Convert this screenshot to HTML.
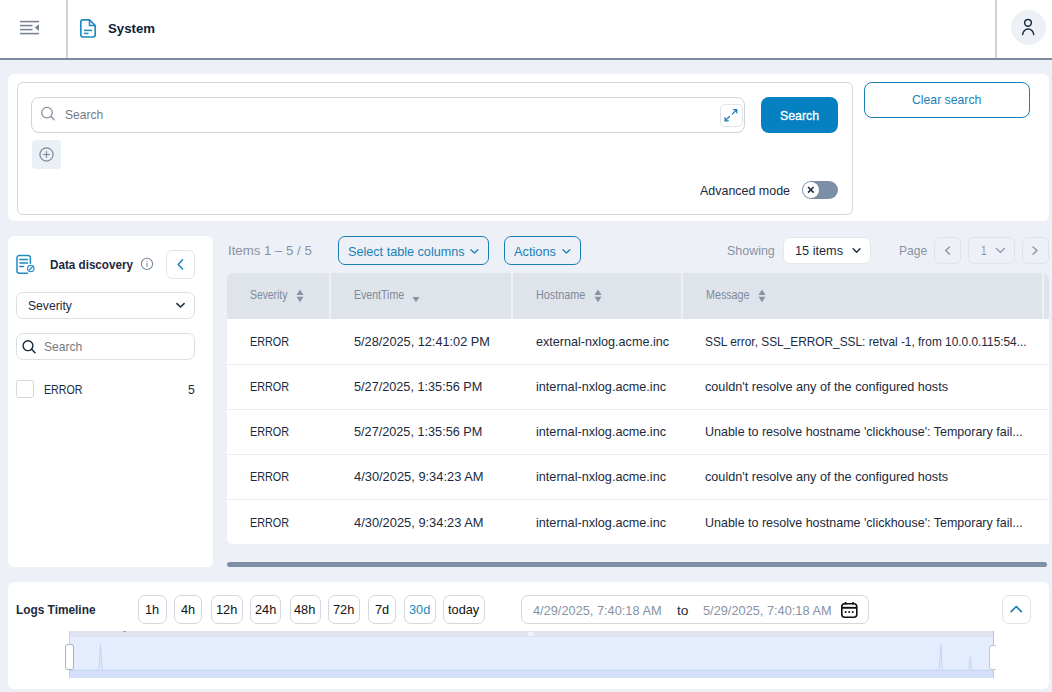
<!DOCTYPE html>
<html><head><meta charset="utf-8"><style>
html,body{margin:0;padding:0;width:1052px;height:692px;overflow:hidden;background:#edf1f7;font-family:"Liberation Sans", sans-serif;}
.a,.box,.t{position:absolute;}
.t{white-space:nowrap;transform-origin:0 0;}
svg{position:absolute;overflow:visible;}
</style></head><body>
<!-- header -->
<div class="box" style="left:0;top:0;width:1052px;height:58px;background:#fff"></div>
<div class="box" style="left:0;top:58px;width:1052px;height:2px;background:#7a8a9c"></div>
<div class="box" style="left:66px;top:0;width:2px;height:58px;background:#cdd3dc"></div>
<div class="box" style="left:995px;top:0;width:2px;height:58px;background:#cdd3dc"></div>
<!-- hamburger -->
<svg style="left:0;top:0" width="60" height="58">
 <g stroke="#7b8593" stroke-width="1.6" stroke-linecap="butt">
  <line x1="20" y1="21.6" x2="39" y2="21.6"/>
  <line x1="20" y1="25.6" x2="32.5" y2="25.6"/>
  <line x1="20" y1="29.6" x2="32.5" y2="29.6"/>
  <line x1="20" y1="33.6" x2="39" y2="33.6"/>
 </g>
 <path d="M39 24.2 L39 31 L34.8 27.6 Z" fill="#7b8593"/>
</svg>
<!-- doc icon -->
<svg style="left:0;top:0" width="120" height="58">
 <path d="M83 19.8 H89.5 L95.2 25.5 V34.8 A2.2 2.2 0 0 1 93 37 H83 A2.2 2.2 0 0 1 80.8 34.8 V22 A2.2 2.2 0 0 1 83 19.8 Z" fill="none" stroke="#1e8ac4" stroke-width="1.7" stroke-linejoin="round"/>
 <path d="M89.5 19.8 V25.5 H95.2" fill="none" stroke="#1e8ac4" stroke-width="1.5"/>
 <line x1="84" y1="30.4" x2="92" y2="30.4" stroke="#1e8ac4" stroke-width="1.5"/>
 <line x1="84" y1="33.4" x2="88.5" y2="33.4" stroke="#1e8ac4" stroke-width="1.5"/>
</svg>
<!-- avatar -->
<div class="box" style="left:1011px;top:10px;width:35px;height:35px;border-radius:50%;background:#edf1f7"></div>
<svg style="left:0;top:0" width="1052" height="58">
 <circle cx="1028" cy="22.8" r="3.4" fill="none" stroke="#1b2a3d" stroke-width="1.5"/>
 <path d="M1022.7 34.6 A5.5 5.5 0 0 1 1033.7 34.6" fill="none" stroke="#1b2a3d" stroke-width="1.5" stroke-linecap="round"/>
</svg>

<!-- search card -->
<div class="box" style="left:8px;top:73.6px;width:1041px;height:147.6px;background:#fff;border-radius:6px"></div>
<div class="box" style="left:17px;top:82px;width:836px;height:133px;border:1px solid #d4d8dd;border-radius:6px;box-sizing:border-box"></div>
<div class="box" style="left:31px;top:97px;width:714px;height:36px;border:1px solid #cfd5dd;border-radius:8px;box-sizing:border-box"></div>
<svg style="left:0;top:0" width="100" height="140">
 <circle cx="47" cy="112.6" r="5.3" fill="none" stroke="#848d99" stroke-width="1.2"/>
 <line x1="50.9" y1="116.5" x2="54.3" y2="119.9" stroke="#848d99" stroke-width="1.3" stroke-linecap="round"/>
</svg>
<div class="box" style="left:719.5px;top:104.3px;width:23px;height:22.5px;border:1px solid #e1e5ea;border-radius:5px;box-sizing:border-box"></div>
<svg style="left:0;top:0" width="760" height="140">
 <g stroke="#1a7fb5" stroke-width="1.3" fill="none" stroke-linecap="round" stroke-linejoin="round">
  <path d="M733.6 109.6 H736.8 V112.8"/><line x1="736.6" y1="109.8" x2="732.3" y2="114.1"/>
  <path d="M725.1 117.6 V120.8 H728.3"/><line x1="725.3" y1="120.6" x2="729.4" y2="116.5"/>
 </g>
</svg>
<div class="box" style="left:761px;top:97px;width:77px;height:36px;background:#0580c1;border-radius:8px"></div>
<div class="box" style="left:32px;top:140px;width:29px;height:29px;background:#ebf0f6;border-radius:4px"></div>
<svg style="left:0;top:0" width="80" height="180">
 <circle cx="46.5" cy="154.5" r="6.6" fill="none" stroke="#7d8896" stroke-width="1.2"/>
 <line x1="46.5" y1="151.2" x2="46.5" y2="157.8" stroke="#7d8896" stroke-width="1.1"/>
 <line x1="43.2" y1="154.5" x2="49.8" y2="154.5" stroke="#7d8896" stroke-width="1.1"/>
</svg>
<div class="box" style="left:802px;top:181px;width:36px;height:18px;background:#7d8fa6;border-radius:9px"></div>
<div class="box" style="left:803px;top:182px;width:16px;height:16px;background:#fff;border-radius:50%"></div>
<svg style="left:0;top:0" width="900" height="220">
 <g stroke="#1b2a3d" stroke-width="1.5" stroke-linecap="butt"><line x1="808" y1="187" x2="813.6" y2="192.6"/><line x1="813.6" y1="187" x2="808" y2="192.6"/></g>
</svg>
<div class="box" style="left:864px;top:82px;width:166px;height:36px;border:1px solid #1a7fb5;border-radius:8px;box-sizing:border-box"></div>

<!-- left panel -->
<div class="box" style="left:8px;top:236px;width:205px;height:331px;background:#fff;border-radius:6px"></div>
<svg style="left:0;top:0" width="220" height="420">
 <g fill="none" stroke="#1e8ac4" stroke-width="1.5" stroke-linecap="round" stroke-linejoin="round">
  <path d="M30.4 263.2 V257.8 A2.2 2.2 0 0 0 28.2 255.6 H19.2 A2.2 2.2 0 0 0 17 257.8 V271 A2.2 2.2 0 0 0 19.2 273.2 H27.5"/>
  <line x1="19.9" y1="259.4" x2="27.6" y2="259.4"/>
  <line x1="19.9" y1="263.1" x2="27.6" y2="263.1"/>
  <line x1="19.9" y1="266.6" x2="23.5" y2="266.6"/>
 </g>
 <circle cx="30.8" cy="268.5" r="3.2" fill="#fff" stroke="#2a90c8" stroke-width="1.2"/>
 <line x1="29.3" y1="270" x2="32.3" y2="267" stroke="#1e8ac4" stroke-width="1.1" stroke-linecap="round"/>
 <circle cx="147" cy="263.9" r="5.6" fill="none" stroke="#7d8896" stroke-width="1.1"/>
 <line x1="147" y1="262.8" x2="147" y2="266.8" stroke="#8a94a2" stroke-width="1.2"/>
 <circle cx="147" cy="261.1" r="0.7" fill="#8a94a2"/>
</svg>
<div class="box" style="left:166px;top:250px;width:29px;height:28.5px;border:1px solid #e1e5ea;border-radius:6px;box-sizing:border-box"></div>
<svg style="left:0;top:0" width="220" height="420">
 <path d="M182.6 259.7 L178.1 264.4 L182.6 269.1" fill="none" stroke="#1a7fb5" stroke-width="1.4" stroke-linecap="round" stroke-linejoin="round"/>
 <path d="M176.9 303.6 L180.5 307 L184.1 303.6" fill="none" stroke="#1b2a3d" stroke-width="1.5" stroke-linecap="round" stroke-linejoin="round"/>
 <circle cx="28" cy="345.7" r="4.9" fill="none" stroke="#1b2a3d" stroke-width="1.4"/>
 <line x1="31.6" y1="349.3" x2="35" y2="352.7" stroke="#1b2a3d" stroke-width="1.5" stroke-linecap="round"/>
</svg>
<div class="box" style="left:16px;top:292px;width:179px;height:27px;border:1px solid #dcdfe4;border-radius:7px;box-sizing:border-box"></div>
<div class="box" style="left:16px;top:333px;width:179px;height:27px;border:1px solid #dcdfe4;border-radius:7px;box-sizing:border-box"></div>
<div class="box" style="left:16px;top:380.3px;width:17.5px;height:17.5px;border:1px solid #d3d8df;border-radius:3px;box-sizing:border-box"></div>

<!-- toolbar -->
<div class="box" style="left:338px;top:236px;width:151px;height:29px;border:1px solid #1a7fb5;border-radius:7px;box-sizing:border-box"></div>
<div class="box" style="left:504px;top:236px;width:77px;height:29px;border:1px solid #1a7fb5;border-radius:7px;box-sizing:border-box"></div>
<div class="box" style="left:783px;top:237px;width:88px;height:27px;background:#fff;border:1px solid #e3e7ec;border-radius:7px;box-sizing:border-box"></div>
<div class="box" style="left:934px;top:237px;width:27px;height:27px;border:1px solid #dfe4ea;border-radius:6px;box-sizing:border-box"></div>
<div class="box" style="left:968px;top:237px;width:47px;height:27px;border:1px solid #dfe4ea;border-radius:6px;box-sizing:border-box"></div>
<div class="box" style="left:1022px;top:237px;width:27px;height:27px;border:1px solid #dfe4ea;border-radius:6px;box-sizing:border-box"></div>
<svg style="left:0;top:0" width="1052" height="320">
 <g fill="none" stroke-width="1.5" stroke-linecap="round" stroke-linejoin="round">
  <path d="M470.9 249.8 L474.4 253 L477.9 249.8" stroke="#1a7fb5" stroke-width="1.3"/>
  <path d="M562.9 249.8 L566.4 253 L569.9 249.8" stroke="#1a7fb5" stroke-width="1.3"/>
  <path d="M853.2 248.8 L856.6 252.2 L860 248.8" stroke="#1b2a3d" stroke-width="1.4"/>
  <path d="M949.6 247 L945.6 250.6 L949.6 254.2" stroke="#8793a3" stroke-width="1.3"/>
  <path d="M996.4 248.4 L1000.4 252.4 L1004.4 248.4" stroke="#8793a3" stroke-width="1.3"/>
  <path d="M1033 247 L1037 250.6 L1033 254.2" stroke="#8793a3" stroke-width="1.3"/>
 </g>
</svg>

<!-- table -->
<div class="box" style="left:227px;top:273px;width:822px;height:271px;background:#fff;border-radius:6px 6px 0 6px;overflow:hidden">
  <div class="box" style="left:0;top:0;width:822px;height:46px;background:#dfe4eb"></div>
  <div class="box" style="left:102px;top:0;width:2px;height:46px;background:#eef1f5"></div>
  <div class="box" style="left:284px;top:0;width:2px;height:46px;background:#eef1f5"></div>
  <div class="box" style="left:454px;top:0;width:2px;height:46px;background:#eef1f5"></div>
  <div class="box" style="left:815px;top:0;width:2px;height:46px;background:#eef1f5"></div>
  <div class="box" style="left:0;top:91px;width:822px;height:1px;background:#e9edf2"></div>
  <div class="box" style="left:0;top:136px;width:822px;height:1px;background:#e9edf2"></div>
  <div class="box" style="left:0;top:181px;width:822px;height:1px;background:#e9edf2"></div>
  <div class="box" style="left:0;top:226px;width:822px;height:1px;background:#e9edf2"></div>
</div>
<svg style="left:0;top:0" width="1052" height="320">
 <g fill="#8793a3">
  <path d="M296.5 295 L300 289.5 L303.5 295 Z"/><path d="M296.5 296.8 L300 302.3 L303.5 296.8 Z"/>
  <path d="M412.5 297 L416 302.3 L419.5 297 Z"/>
  <path d="M594.5 295 L598 289.5 L601.5 295 Z"/><path d="M594.5 296.8 L598 302.3 L601.5 296.8 Z"/>
  <path d="M758.5 295 L762 289.5 L765.5 295 Z"/><path d="M758.5 296.8 L762 302.3 L765.5 296.8 Z"/>
 </g>
</svg>
<div class="box" style="left:227px;top:562px;width:820px;height:5px;background:#7d90a5;border-radius:3px"></div>

<!-- timeline card -->
<div class="box" style="left:8px;top:582px;width:1041px;height:107px;background:#fff;border-radius:6px"></div>
<div class="box" style="left:521px;top:595px;width:348px;height:29px;border:1px solid #d3d8df;border-radius:7px;box-sizing:border-box"></div>
<svg style="left:0;top:0" width="1052" height="692">
 <g fill="none" stroke="#111" stroke-width="1.6" stroke-linejoin="round">
  <rect x="841.8" y="603.8" width="15" height="13.5" rx="3"/>
  <line x1="841.8" y1="607.8" x2="856.8" y2="607.8" stroke-width="1.9"/>
  <line x1="845.5" y1="602" x2="845.5" y2="604.5"/><line x1="853" y1="602" x2="853" y2="604.5"/>
 </g>
 <g fill="#111"><circle cx="845.7" cy="611.9" r="1"/><circle cx="849.2" cy="611.9" r="1"/><circle cx="852.7" cy="611.9" r="1"/></g>
</svg>
<div class="box" style="left:1002px;top:595px;width:29px;height:29px;border:1px solid #dfe3e9;border-radius:7px;box-sizing:border-box"></div>
<svg style="left:0;top:0" width="1052" height="692">
 <path d="M1011.2 611.6 L1016.3 606.5 L1021.4 611.6" fill="none" stroke="#1a7fb5" stroke-width="1.7" stroke-linecap="round" stroke-linejoin="round"/>
</svg>
<!-- chart -->
<div class="box" style="left:69px;top:631px;width:925px;height:47px;background:#e4edfd"></div>
<div class="box" style="left:69px;top:631px;width:925px;height:6px;background:#dee3ef"></div>
<div class="box" style="left:69px;top:670px;width:925px;height:8px;background:#d5e1fa"></div>
<div class="box" style="left:69px;top:631px;width:1px;height:47px;background:#c9d4ea"></div>
<div class="box" style="left:993px;top:631px;width:1px;height:47px;background:#b9c4d8"></div>
<div class="box" style="left:123px;top:631px;width:3px;height:1px;background:#9aa3b0"></div>
<div class="box" style="left:528px;top:632px;width:6px;height:4px;background:#edf1fb"></div>
<svg style="left:0;top:0" width="1052" height="692">
 <path d="M69 670.3 H99 L100.5 644.5 L102 670.3 H939.3 L940.8 644.5 L942.3 670.3 H968.8 L970.3 657 L971.8 670.3 H994" fill="none" stroke="#c3d3f3" stroke-width="1"/>
</svg>
<div class="box" style="left:65px;top:644px;width:9px;height:26px;background:#fff;border:1px solid #aab2bc;border-radius:3px;box-sizing:border-box"></div>
<div class="box" style="left:0;top:0;width:995.5px;height:692px;overflow:hidden"><div class="box" style="left:988.5px;top:644.8px;width:9px;height:25px;background:#fff;border:1px solid #c3c9d1;border-radius:3px;box-sizing:border-box"></div></div>

<div class='box' style='left:138.4px;top:595.3px;width:28.3px;height:28.3px;border:1px solid #d3d8df;border-radius:7px;box-sizing:border-box'></div>
<div class='t' style='left:145.45px;top:602.56px;font-size:13.3px;line-height:13.3px;color:#111;transform:scaleX(0.96)'>1h</div>
<div class='box' style='left:174.2px;top:595.3px;width:28.2px;height:28.3px;border:1px solid #d3d8df;border-radius:7px;box-sizing:border-box'></div>
<div class='t' style='left:181.20px;top:602.56px;font-size:13.3px;line-height:13.3px;color:#111;transform:scaleX(0.96)'>4h</div>
<div class='box' style='left:210.5px;top:595.3px;width:32.1px;height:28.3px;border:1px solid #d3d8df;border-radius:7px;box-sizing:border-box'></div>
<div class='t' style='left:215.90px;top:602.56px;font-size:13.3px;line-height:13.3px;color:#111;transform:scaleX(0.96)'>12h</div>
<div class='box' style='left:250.4px;top:595.3px;width:31.1px;height:28.3px;border:1px solid #d3d8df;border-radius:7px;box-sizing:border-box'></div>
<div class='t' style='left:255.30px;top:602.56px;font-size:13.3px;line-height:13.3px;color:#111;transform:scaleX(0.96)'>24h</div>
<div class='box' style='left:289.5px;top:595.3px;width:31.1px;height:28.3px;border:1px solid #d3d8df;border-radius:7px;box-sizing:border-box'></div>
<div class='t' style='left:294.40px;top:602.56px;font-size:13.3px;line-height:13.3px;color:#111;transform:scaleX(0.96)'>48h</div>
<div class='box' style='left:328.3px;top:595.3px;width:31.4px;height:28.3px;border:1px solid #d3d8df;border-radius:7px;box-sizing:border-box'></div>
<div class='t' style='left:333.35px;top:602.56px;font-size:13.3px;line-height:13.3px;color:#111;transform:scaleX(0.96)'>72h</div>
<div class='box' style='left:368.0px;top:595.3px;width:27.5px;height:28.3px;border:1px solid #d3d8df;border-radius:7px;box-sizing:border-box'></div>
<div class='t' style='left:374.65px;top:602.56px;font-size:13.3px;line-height:13.3px;color:#111;transform:scaleX(0.96)'>7d</div>
<div class='box' style='left:404.3px;top:595.3px;width:31.3px;height:28.3px;border:1px solid #d3d8df;border-radius:7px;box-sizing:border-box'></div>
<div class='t' style='left:409.30px;top:602.56px;font-size:13.3px;line-height:13.3px;color:#1a8ac0;transform:scaleX(0.96)'>30d</div>
<div class='box' style='left:443.3px;top:595.3px;width:41.4px;height:28.3px;border:1px solid #d3d8df;border-radius:7px;box-sizing:border-box'></div>
<div class='t' style='left:448.38px;top:602.56px;font-size:13.3px;line-height:13.3px;color:#111;transform:scaleX(0.96)'>today</div>
<div class='t' style='left:108.40px;top:21.74px;font-size:13.5px;line-height:13.5px;font-weight:bold;color:#0f1f35;transform:scaleX(0.9785);'>System</div>
<div class='t' style='left:64.90px;top:108.24px;font-size:13.5px;line-height:13.5px;font-weight:normal;color:#737a84;transform:scaleX(0.8929);'>Search</div>
<div class='t' style='left:780.00px;top:109.00px;font-size:13px;line-height:13px;font-weight:normal;color:#ffffff;transform:scaleX(0.9465);-webkit-text-stroke:0.3px #fff;'>Search</div>
<div class='t' style='left:699.50px;top:183.86px;font-size:13.3px;line-height:13.3px;font-weight:normal;color:#1b2a3d;transform:scaleX(0.9364);'>Advanced mode</div>
<div class='t' style='left:912.40px;top:92.54px;font-size:13.5px;line-height:13.5px;font-weight:normal;color:#1a7fb5;transform:scaleX(0.9055);'>Clear search</div>
<div class='t' style='left:49.80px;top:257.74px;font-size:13.5px;line-height:13.5px;font-weight:bold;color:#1b2a3d;transform:scaleX(0.8640);'>Data discovery</div>
<div class='t' style='left:27.80px;top:298.54px;font-size:13.5px;line-height:13.5px;font-weight:normal;color:#1b2a3d;transform:scaleX(0.8999);'>Severity</div>
<div class='t' style='left:44.30px;top:339.74px;font-size:13.5px;line-height:13.5px;font-weight:normal;color:#737a84;transform:scaleX(0.8953);'>Search</div>
<div class='t' style='left:43.50px;top:383.10px;font-size:13px;line-height:13px;font-weight:normal;color:#1b2a3d;transform:scaleX(0.8200);'>ERROR</div>
<div class='t' style='left:188.20px;top:383.10px;font-size:13px;line-height:13px;font-weight:normal;color:#1b2a3d;transform:scaleX(0.9400);'>5</div>
<div class='t' style='left:227.50px;top:244.30px;font-size:13px;line-height:13px;font-weight:normal;color:#8793a3;transform:scaleX(1.0173);'>Items 1 – 5 / 5</div>
<div class='t' style='left:348.30px;top:245.06px;font-size:13.3px;line-height:13.3px;font-weight:normal;color:#1a7fb5;transform:scaleX(0.9503);'>Select table columns</div>
<div class='t' style='left:514.30px;top:245.06px;font-size:13.3px;line-height:13.3px;font-weight:normal;color:#1a7fb5;transform:scaleX(0.9608);'>Actions</div>
<div class='t' style='left:727.30px;top:243.86px;font-size:13.3px;line-height:13.3px;font-weight:normal;color:#8793a3;transform:scaleX(0.9370);'>Showing</div>
<div class='t' style='left:795.00px;top:243.86px;font-size:13.3px;line-height:13.3px;font-weight:normal;color:#1b2a3d;transform:scaleX(0.9549);'>15 items</div>
<div class='t' style='left:898.50px;top:243.86px;font-size:13.3px;line-height:13.3px;font-weight:normal;color:#8793a3;transform:scaleX(0.9078);'>Page</div>
<div class='t' style='left:981.00px;top:244.10px;font-size:13px;line-height:13px;font-weight:normal;color:#8793a3;transform:scaleX(0.7603);'>1</div>
<div class='t' style='left:250.00px;top:289.13px;font-size:12px;line-height:12px;font-weight:normal;color:#7d8a9c;transform:scaleX(0.8603);'>Severity</div>
<div class='t' style='left:353.60px;top:289.13px;font-size:12px;line-height:12px;font-weight:normal;color:#7d8a9c;transform:scaleX(0.8804);'>EventTime</div>
<div class='t' style='left:536.30px;top:289.13px;font-size:12px;line-height:12px;font-weight:normal;color:#7d8a9c;transform:scaleX(0.9012);'>Hostname</div>
<div class='t' style='left:705.50px;top:289.13px;font-size:12px;line-height:12px;font-weight:normal;color:#7d8a9c;transform:scaleX(0.8932);'>Message</div>
<div class='t' style='left:250.30px;top:335.10px;font-size:13px;line-height:13px;font-weight:normal;color:#1b2a3d;transform:scaleX(0.8306);'>ERROR</div>
<div class='t' style='left:353.70px;top:335.10px;font-size:13px;line-height:13px;font-weight:normal;color:#1b2a3d;transform:scaleX(0.9792);'>5/28/2025, 12:41:02 PM</div>
<div class='t' style='left:536.10px;top:335.10px;font-size:13px;line-height:13px;font-weight:normal;color:#1b2a3d;transform:scaleX(0.9687);'>external-nxlog.acme.inc</div>
<div class='t' style='left:705.40px;top:335.10px;font-size:13px;line-height:13px;font-weight:normal;color:#1b2a3d;transform:scaleX(0.9120);'>SSL error, SSL_ERROR_SSL: retval -1, from 10.0.0.115:54...</div>
<div class='t' style='left:250.30px;top:380.20px;font-size:13px;line-height:13px;font-weight:normal;color:#1b2a3d;transform:scaleX(0.8306);'>ERROR</div>
<div class='t' style='left:353.70px;top:380.20px;font-size:13px;line-height:13px;font-weight:normal;color:#1b2a3d;transform:scaleX(0.9753);'>5/27/2025, 1:35:56 PM</div>
<div class='t' style='left:536.10px;top:380.20px;font-size:13px;line-height:13px;font-weight:normal;color:#1b2a3d;transform:scaleX(0.9724);'>internal-nxlog.acme.inc</div>
<div class='t' style='left:705.40px;top:380.20px;font-size:13px;line-height:13px;font-weight:normal;color:#1b2a3d;transform:scaleX(0.9734);'>couldn&#x27;t resolve any of the configured hosts</div>
<div class='t' style='left:250.30px;top:425.30px;font-size:13px;line-height:13px;font-weight:normal;color:#1b2a3d;transform:scaleX(0.8306);'>ERROR</div>
<div class='t' style='left:353.70px;top:425.30px;font-size:13px;line-height:13px;font-weight:normal;color:#1b2a3d;transform:scaleX(0.9753);'>5/27/2025, 1:35:56 PM</div>
<div class='t' style='left:536.10px;top:425.30px;font-size:13px;line-height:13px;font-weight:normal;color:#1b2a3d;transform:scaleX(0.9724);'>internal-nxlog.acme.inc</div>
<div class='t' style='left:705.40px;top:425.30px;font-size:13px;line-height:13px;font-weight:normal;color:#1b2a3d;transform:scaleX(0.9607);'>Unable to resolve hostname &#x27;clickhouse&#x27;: Temporary fail...</div>
<div class='t' style='left:250.30px;top:470.40px;font-size:13px;line-height:13px;font-weight:normal;color:#1b2a3d;transform:scaleX(0.8306);'>ERROR</div>
<div class='t' style='left:353.70px;top:470.40px;font-size:13px;line-height:13px;font-weight:normal;color:#1b2a3d;transform:scaleX(0.9898);'>4/30/2025, 9:34:23 AM</div>
<div class='t' style='left:536.10px;top:470.40px;font-size:13px;line-height:13px;font-weight:normal;color:#1b2a3d;transform:scaleX(0.9724);'>internal-nxlog.acme.inc</div>
<div class='t' style='left:705.40px;top:470.40px;font-size:13px;line-height:13px;font-weight:normal;color:#1b2a3d;transform:scaleX(0.9734);'>couldn&#x27;t resolve any of the configured hosts</div>
<div class='t' style='left:250.30px;top:515.50px;font-size:13px;line-height:13px;font-weight:normal;color:#1b2a3d;transform:scaleX(0.8306);'>ERROR</div>
<div class='t' style='left:353.70px;top:515.50px;font-size:13px;line-height:13px;font-weight:normal;color:#1b2a3d;transform:scaleX(0.9898);'>4/30/2025, 9:34:23 AM</div>
<div class='t' style='left:536.10px;top:515.50px;font-size:13px;line-height:13px;font-weight:normal;color:#1b2a3d;transform:scaleX(0.9724);'>internal-nxlog.acme.inc</div>
<div class='t' style='left:705.40px;top:515.50px;font-size:13px;line-height:13px;font-weight:normal;color:#1b2a3d;transform:scaleX(0.9607);'>Unable to resolve hostname &#x27;clickhouse&#x27;: Temporary fail...</div>
<div class='t' style='left:16.30px;top:603.30px;font-size:13px;line-height:13px;font-weight:bold;color:#1b2a3d;transform:scaleX(0.9120);'>Logs Timeline</div>
<div class='t' style='left:533.20px;top:604.16px;font-size:13.3px;line-height:13.3px;font-weight:normal;color:#8793a3;transform:scaleX(0.9609);'>4/29/2025, 7:40:18 AM</div>
<div class='t' style='left:676.60px;top:603.96px;font-size:13.3px;line-height:13.3px;font-weight:normal;color:#1b2a3d;transform:scaleX(1.0276);'>to</div>
<div class='t' style='left:703.00px;top:604.16px;font-size:13.3px;line-height:13.3px;font-weight:normal;color:#8793a3;transform:scaleX(0.9609);'>5/29/2025, 7:40:18 AM</div>
</body></html>
